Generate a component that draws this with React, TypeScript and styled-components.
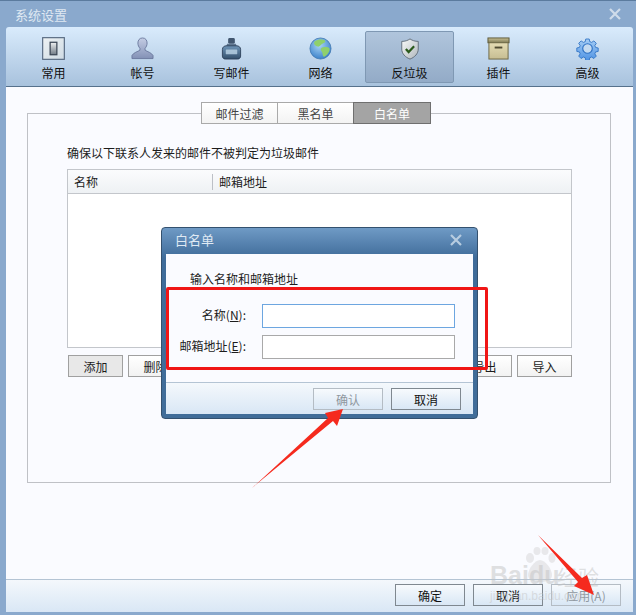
import React from 'react';
import styled, { createGlobalStyle } from 'styled-components';

const GlobalStyle = createGlobalStyle`
  html, body { margin: 0; padding: 0; background: #8aa9cd; }
  body { font-family: "Noto Sans CJK SC", "Liberation Sans", sans-serif; font-size: 12px; color: #1c1c1c; }
`;

const tools = ['常用', '帐号', '写邮件', '网络', '反垃圾', '插件', '高级'];

const ToolIcon = ({ index }: { index: number }) => {
  switch (index) {
    case 0:
      return (
        <svg width="23" height="23" viewBox="0 0 24 24">
          <defs>
            <linearGradient id="sw" x1="0" y1="0" x2="0" y2="1">
              <stop offset="0" stopColor="#f0f2f2" />
              <stop offset="1" stopColor="#6f7a85" />
            </linearGradient>
            <linearGradient id="face" x1="0" y1="0" x2="1" y2="1">
              <stop offset="0" stopColor="#eef2f3" />
              <stop offset="1" stopColor="#cfdbe4" />
            </linearGradient>
          </defs>
          <rect x="0.700" y="0.700" width="22.600" height="22.600" fill="url(#face)" stroke="#55687f" strokeWidth="1.200" />
          <rect x="8.500" y="5.500" width="7" height="13" fill="url(#sw)" stroke="#3b4654" strokeWidth="1.300" />
        </svg>
      );
    case 1:
      return (
        <svg width="23" height="23" viewBox="0 0 24 24">
          <defs>
            <linearGradient id="person" x1="0" y1="0" x2="0" y2="1">
              <stop offset="0" stopColor="#c4cde4" />
              <stop offset="1" stopColor="#8391b6" />
            </linearGradient>
          </defs>
          <path d="M12 1c3.300 0 4.800 2.600 4.800 5.300 0 2.300-.9 4.200-2.100 5.400v2.100c2.200 1.500 6.500 2.300 8.300 5.500v3.200H1v-3.200c1.800-3.200 6.100-4 8.300-5.500v-2.100C8.100 10.500 7.200 8.600 7.200 6.300 7.200 3.600 8.700 1 12 1z" fill="url(#person)" stroke="#66749a" strokeWidth="0.900" />
        </svg>
      );
    case 2:
      return (
        <svg width="23" height="23" viewBox="0 0 24 24">
          <defs>
            <linearGradient id="ink" x1="0" y1="0" x2="0" y2="1">
              <stop offset="0" stopColor="#6f95b8" />
              <stop offset="1" stopColor="#34506c" />
            </linearGradient>
          </defs>
          <rect x="8.500" y="1" width="7" height="6" rx="1.500" fill="#41566f" />
          <path d="M7.500 7h9l1 2.500h-11z" fill="#5f7690" />
          <path d="M2.500 13c0-2.500 2-3.800 4-3.800h11c2 0 4 1.300 4 3.800v7c0 1.800-1.500 3-3 3h-13c-1.500 0-3-1.200-3-3z" fill="url(#ink)" stroke="#2a3d55" strokeWidth="0.900" />
          <rect x="6" y="13" width="12" height="5" rx="0.500" fill="#b6cfe2" opacity="0.850" />
        </svg>
      );
    case 3:
      return (
        <svg width="23" height="23" viewBox="0 0 24 24">
          <defs>
            <radialGradient id="sea" cx="0.450" cy="0.350" r="0.750">
              <stop offset="0" stopColor="#a8d4f5" />
              <stop offset="1" stopColor="#2c76c4" />
            </radialGradient>
          </defs>
          <circle cx="12" cy="12" r="11" fill="url(#sea)" stroke="#3b74ae" strokeWidth="0.800" />
          <path d="M6 4.500C9 2.500 14 2 16.500 3.500c1.500 1.200-.5 3-2.500 3.500s-2.500 3.500-5 3S4 7 6 4.500zM13 11.500c2-1.500 7-1.500 8.500.5.500 3-2.500 7-5.500 8.500-2 .5-1.500-3.500-2.500-5s-2-3-.5-4z" fill="#8fd06c" />
        </svg>
      );
    case 4:
      return (
        <svg width="22" height="22" viewBox="0 0 24 24">
          <defs>
            <linearGradient id="shield" x1="0" y1="0" x2="1" y2="1">
              <stop offset="0" stopColor="#fafbf9" />
              <stop offset="1" stopColor="#aeb6bc" />
            </linearGradient>
          </defs>
          <path d="M12 1c2.500 1.800 5.500 2.700 9 2.700v8.300c0 5-3.800 9-9 11-5.200-2-9-6-9-11V3.700c3.500 0 6.500-.9 9-2.700z" fill="url(#shield)" stroke="#5e6a76" strokeWidth="1" />
          <path d="M7.500 12l3 3.300 6-6.300" fill="none" stroke="#2b5a1c" strokeWidth="2.400" />
        </svg>
      );
    case 5:
      return (
        <svg width="23" height="23" viewBox="0 0 24 24">
          <defs>
            <linearGradient id="lid" x1="0" y1="0" x2="0" y2="1">
              <stop offset="0" stopColor="#c9c196" />
              <stop offset="1" stopColor="#7f7a55" />
            </linearGradient>
            <linearGradient id="crate" x1="0" y1="0" x2="0" y2="1">
              <stop offset="0" stopColor="#e4dcb4" />
              <stop offset="1" stopColor="#c6bd92" />
            </linearGradient>
          </defs>
          <rect x="1" y="1" width="22" height="5" fill="url(#lid)" stroke="#5c5838" strokeWidth="1" />
          <rect x="2" y="6" width="20" height="17" fill="url(#crate)" stroke="#6d6845" strokeWidth="1" />
          <rect x="8" y="10" width="8" height="2" fill="#4f4b32" />
        </svg>
      );
    default:
      return (
        <svg width="23" height="23" viewBox="0 0 24 24">
          <defs>
            <linearGradient id="gear" x1="0" y1="0" x2="0" y2="1">
              <stop offset="0" stopColor="#a5cdf5" />
              <stop offset="1" stopColor="#4f93e4" />
            </linearGradient>
          </defs>
          <path d="M10 1h4l.6 3 2.200.9 2.600-1.700 2.800 2.800-1.700 2.600.9 2.200 3 .6v4l-3 .6-.9 2.200 1.700 2.600-2.800 2.800-2.600-1.700-2.200.9-.6 3h-4l-.6-3-2.200-.9-2.600 1.700-2.800-2.800 1.700-2.600-.9-2.200-3-.6v-4l3-.6.9-2.200-1.700-2.600L4.600 3.200l2.600 1.700L9.400 4z" fill="url(#gear)" stroke="#2f72c4" strokeWidth="1" transform="translate(1.200 1.200) scale(0.9)" />
          <circle cx="12" cy="12" r="5" fill="#c4daf0" stroke="#2f72c4" strokeWidth="1.200" />
        </svg>
      );
  }
};

const Shell = styled.div`
  position: relative;
  width: 636px;
  height: 615px;
  overflow: hidden;
  display: flex;
  flex-direction: column;
  box-sizing: border-box;
  border-top: 1px solid #5b7b9e;
  background: #8aa9cd;
`;

const TitleBar = styled.div`
  height: 26px;
  flex: none;
  display: flex;
  align-items: center;
  justify-content: space-between;
  padding: 0 15px 0 15px;
  color: #dfe8f2;
  font-size: 13px;
`;

const CloseMark = styled.svg<{ $tone: string }>`
  width: 12px;
  height: 12px;
  stroke: ${p => p.$tone};
  stroke-width: 2.200;
  fill: none;
`;

const Inner = styled.div`
  flex: 1;
  margin: 0 3px 3px 6px;
  display: flex;
  flex-direction: column;
  border-radius: 3px 3px 0 0;
  overflow: hidden;
`;

const Toolbar = styled.div`
  height: 60px;
  flex: none;
  display: flex;
  padding: 4px 0 0 3px;
  box-sizing: border-box;
  background: linear-gradient(#d9ebfc, #a8c2dd);
  border-bottom: 1px solid #56718c;
`;

const ToolItem = styled.div<{ $active?: boolean }>`
  width: 89px;
  height: 52px;
  box-sizing: border-box;
  display: flex;
  flex-direction: column;
  align-items: center;
  padding-top: 5px;
  border-radius: 2px;
  border: 1px solid ${p => (p.$active ? '#7f98b3' : 'transparent')};
  background: ${p => (p.$active ? 'linear-gradient(#b0c5dc, #93abc7)' : 'none')};
`;

const IconSlot = styled.div`
  height: 23px;
  display: flex;
  align-items: center;
  justify-content: center;
`;

const ToolLabel = styled.span`
  margin-top: 4px;
  font-size: 12px;
  line-height: 17px;
  color: #111;
`;

const Content = styled.div`
  flex: 1;
  display: flex;
  flex-direction: column;
  padding: 15px 22px 96px 21px;
  background: #fafbff;
`;

const Tabs = styled.div`
  align-self: center;
  display: flex;
  height: 22px;
  margin-bottom: -11px;
  margin-right: 6px;
  position: relative;
  z-index: 1;
  background: #fafbff;
`;

const Tab = styled.div<{ $width: number; $on?: boolean }>`
  width: ${p => p.$width}px;
  box-sizing: border-box;
  display: flex;
  align-items: center;
  justify-content: center;
  font-size: 12px;
  color: ${p => (p.$on ? '#fff' : '#444')};
  border: 1px solid ${p => (p.$on ? '#6f6f6f' : '#a9a9a9')};
  background: ${p => (p.$on ? '#a4a4a4' : 'linear-gradient(#ffffff, #f3f3f3)')};
  & + & { margin-left: -1px; }
`;

const GroupBox = styled.div`
  flex: 1;
  border: 1px solid #bfc1c6;
  padding: 30px 38px 0 39px;
  display: flex;
  flex-direction: column;
`;

const Intro = styled.div`
  font-size: 12px;
  line-height: 17px;
  margin-bottom: 8px;
`;

const Table = styled.div`
  height: 179px;
  box-sizing: border-box;
  border: 1px solid #c3c6cb;
  background: #fff;
`;

const TableHead = styled.div`
  height: 24px;
  display: flex;
  align-items: center;
  box-sizing: border-box;
  background: linear-gradient(#fbfcfd, #eef1f4);
  border-bottom: 1px solid #c3c6cb;
`;

const HeadCell = styled.div<{ $width?: number }>`
  width: ${p => (p.$width ? `${p.$width}px` : 'auto')};
  flex: ${p => (p.$width ? 'none' : 1)};
  box-sizing: border-box;
  padding-left: 6px;
  height: 16px;
  line-height: 16px;
  border-right: ${p => (p.$width ? '1px solid #bcc0c6' : 'none')};
`;

const ButtonRow = styled.div`
  display: flex;
  justify-content: space-between;
  margin-top: 7px;
  padding-left: 1px;
`;

const ButtonGroup = styled.div`
  display: flex;
  gap: 5px;
`;

const SmallButton = styled.div<{ $pressed?: boolean }>`
  width: 55px;
  height: 22px;
  box-sizing: border-box;
  display: flex;
  align-items: center;
  justify-content: center;
  font-size: 12px;
  border: 1px solid #a0a0a0;
  background: ${p => (p.$pressed ? '#e8e8e8' : 'linear-gradient(#ffffff, #f2f2f2)')};
`;

const Footer = styled.div`
  height: 33px;
  flex: none;
  box-sizing: border-box;
  display: flex;
  justify-content: flex-end;
  gap: 8px;
  padding: 4px 12px 0 0;
  border-top: 1px solid #b4c4d4;
  background: linear-gradient(#f4f8fc, #d9e7f5);
`;

const ActionButton = styled.div<{ $disabled?: boolean }>`
  width: 70px;
  height: 22px;
  box-sizing: border-box;
  display: flex;
  align-items: center;
  justify-content: center;
  font-size: 12px;
  color: ${p => (p.$disabled ? '#8f979f' : '#111')};
  border: 1px solid ${p => (p.$disabled ? '#b4bcc4' : '#7f8890')};
  background: linear-gradient(#f7fafd, #d9e7f5);
`;

const Dialog = styled.div`
  position: absolute;
  left: 161px;
  top: 226px;
  width: 317px;
  height: 192px;
  box-sizing: border-box;
  display: flex;
  flex-direction: column;
  padding: 0 4px 4px;
  background: linear-gradient(#6f9ac5 0, #3f6c9a 30px, #416d99 100%);
  border: 1px solid #34516f;
  border-radius: 4px;
`;

const DialogTitle = styled.div`
  height: 26px;
  flex: none;
  box-sizing: border-box;
  display: flex;
  align-items: center;
  justify-content: space-between;
  padding: 0 11px 3px 9px;
  font-size: 13px;
  color: #dfe9f3;
`;

const DialogBody = styled.div`
  flex: 1;
  background: #fafbff;
  padding: 16px 18px 0 24px;
`;

const DialogHint = styled.div`
  line-height: 17px;
  margin-bottom: 17px;
`;

const Field = styled.div`
  display: flex;
  align-items: center;
  height: 24px;
  margin-bottom: 7px;
`;

const FieldLabel = styled.label`
  width: 72px;
  text-align: right;
  margin: 0 16px 4px -16px;
  flex: none;
  white-space: nowrap;
  u { text-underline-offset: 1px; }
`;

const FieldInput = styled.input<{ $focus?: boolean }>`
  width: 193px;
  height: 24px;
  box-sizing: border-box;
  margin: 0;
  padding: 0 4px;
  outline: none;
  background: #fff;
  border: 1px solid ${p => (p.$focus ? '#6da6e0' : '#a9a9a9')};
`;

const DialogFooter = styled.div`
  height: 32px;
  flex: none;
  box-sizing: border-box;
  display: flex;
  justify-content: flex-end;
  gap: 8px;
  padding: 5px 12px 0 0;
  border-top: 1px solid #b4c4d4;
  background: linear-gradient(#f4f8fc, #d9e7f5);
`;

const RedFrame = styled.div`
  position: absolute;
  left: 166px;
  top: 286px;
  width: 322px;
  height: 83px;
  box-sizing: border-box;
  border: 3px solid #f01616;
  border-radius: 2px;
`;

const ArrowLayer = styled.svg`
  position: absolute;
  left: 0;
  top: 0;
  width: 636px;
  height: 615px;
  pointer-events: none;
`;

const Watermark = styled.div`
  position: absolute;
  left: 490px;
  top: 546px;
  width: 146px;
  height: 66px;
  pointer-events: none;
  font-family: "Liberation Sans", sans-serif;
  color: rgba(195, 195, 195, 0.5);
`;

const MarkPaw = styled.svg`
  position: absolute;
  left: 34px;
  top: 0;
  width: 32px;
  height: 36px;
  fill: rgba(205, 205, 205, 0.4);
`;

const MarkLogo = styled.div`
  position: absolute;
  left: 0;
  top: 15px;
  font-size: 25px;
  font-weight: bold;
  line-height: 26px;
  white-space: nowrap;
`;

const MarkCjk = styled.div`
  position: absolute;
  left: 67px;
  top: 17px;
  font-family: "Noto Sans CJK SC", sans-serif;
  font-size: 21px;
  line-height: 24px;
  white-space: nowrap;
`;

const MarkUrl = styled.div`
  position: absolute;
  left: 0;
  top: 42px;
  font-size: 12px;
  line-height: 14px;
  white-space: nowrap;
`;

const Close = ({ tone }: { tone: string }) => (
  <CloseMark viewBox="0 0 12 12" $tone={tone}>
    <path d="M1 1l10 10M11 1L1 11" />
  </CloseMark>
);

export default function App() {
  return (
    <>
      <GlobalStyle />
      <Shell>
        <TitleBar>
          <span>系统设置</span>
          <Close tone="#cfdcea" />
        </TitleBar>
        <Inner>
          <Toolbar>
            {tools.map((name, i) => (
              <ToolItem key={name} $active={i === 4}>
                <IconSlot>
                  <ToolIcon index={i} />
                </IconSlot>
                <ToolLabel>{name}</ToolLabel>
              </ToolItem>
            ))}
          </Toolbar>
          <Content>
            <Tabs>
              <Tab $width={77}>邮件过滤</Tab>
              <Tab $width={77}>黑名单</Tab>
              <Tab $width={78} $on>白名单</Tab>
            </Tabs>
            <GroupBox>
              <Intro>确保以下联系人发来的邮件不被判定为垃圾邮件</Intro>
              <Table>
                <TableHead>
                  <HeadCell $width={145}>名称</HeadCell>
                  <HeadCell>邮箱地址</HeadCell>
                </TableHead>
              </Table>
              <ButtonRow>
                <ButtonGroup>
                  <SmallButton $pressed>添加</SmallButton>
                  <SmallButton>删除</SmallButton>
                </ButtonGroup>
                <ButtonGroup>
                  <SmallButton>导出</SmallButton>
                  <SmallButton>导入</SmallButton>
                </ButtonGroup>
              </ButtonRow>
            </GroupBox>
          </Content>
          <Footer>
            <ActionButton>确定</ActionButton>
            <ActionButton>取消</ActionButton>
            <ActionButton $disabled>应用(A)</ActionButton>
          </Footer>
        </Inner>

        <Dialog>
          <DialogTitle>
            <span>白名单</span>
            <Close tone="#b7cce0" />
          </DialogTitle>
          <DialogBody>
            <DialogHint>输入名称和邮箱地址</DialogHint>
            <Field>
              <FieldLabel>名称(<u>N</u>):</FieldLabel>
              <FieldInput $focus />
            </Field>
            <Field>
              <FieldLabel>邮箱地址(<u>E</u>):</FieldLabel>
              <FieldInput />
            </Field>
          </DialogBody>
          <DialogFooter>
            <ActionButton $disabled>确认</ActionButton>
            <ActionButton>取消</ActionButton>
          </DialogFooter>
        </Dialog>

        <RedFrame />
        <Watermark>
          <MarkPaw viewBox="0 0 32 36">
            <ellipse cx="6" cy="11" rx="4" ry="5" />
            <ellipse cx="13" cy="4" rx="3.500" ry="4" />
            <ellipse cx="21" cy="4" rx="3.500" ry="4" />
            <ellipse cx="28" cy="11" rx="3.500" ry="5" />
            <path d="M16 13c5 0 12 9 12 15 0 6-7 7-12 7s-12-1-12-7c0-6 7-15 12-15z" />
          </MarkPaw>
          <MarkLogo>Baidu</MarkLogo>
          <MarkCjk>经验</MarkCjk>
          <MarkUrl>jingyan.baidu.com</MarkUrl>
        </Watermark>
        <ArrowLayer viewBox="0 0 636 615">
          <path d="M252 487L328 417 325 412 343 408 337 425 333 420z" fill="#f52a1e" />
          <path d="M538 534L582 577 587 574 594 594 574 585 578 581z" fill="#f52a1e" />
        </ArrowLayer>
      </Shell>
    </>
  );
}
